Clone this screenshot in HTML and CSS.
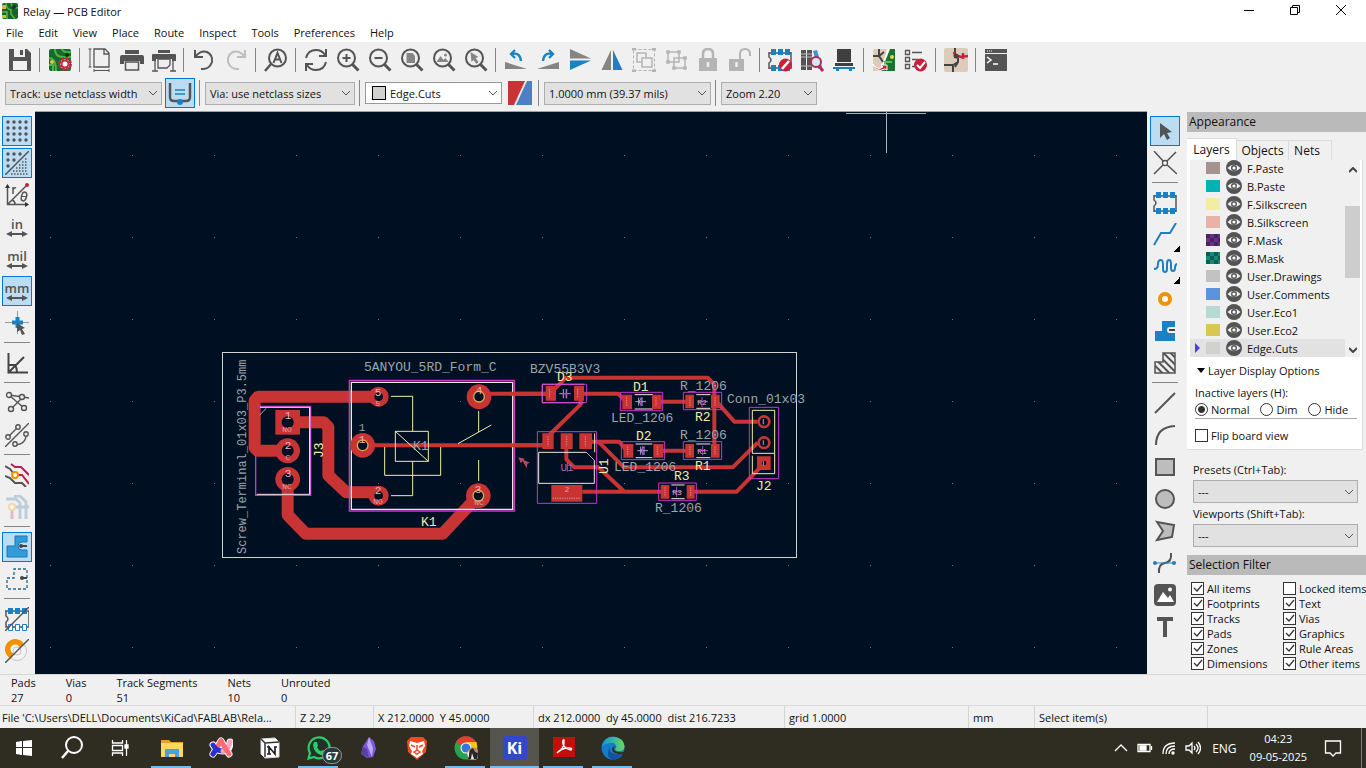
FILE: index.html
```html
<!DOCTYPE html>
<html lang="en">
<head>
<meta charset="utf-8">
<title>Relay — PCB Editor</title>
<link rel="stylesheet" href="styles.css">
</head>
<body>
<svg class="defs" aria-hidden="true">
  <defs>
    <symbol id="lens" viewBox="0 0 24 24"><circle cx="10.500" cy="10" r="8.500" fill="none" stroke="#545454" stroke-width="2"/><path d="M16.500 16.500l6 6" stroke="#545454" stroke-width="3"/></symbol>
    <symbol id="eye" viewBox="0 0 16 16"><circle cx="8" cy="8" r="8" fill="#545454"/><path d="M1.500 8Q8 1.500 14.500 8Q8 14.500 1.500 8z" fill="#f4f4f4"/><circle cx="8" cy="8" r="2.300" fill="#fff" stroke="#545454" stroke-width="1.400"/></symbol>
    <symbol id="fp" viewBox="0 0 24 24"><path d="M1 4v5q4 3 0 6v6M23 4v17M1 5h22M1 20h22" fill="none" stroke="#545454" stroke-width="1.500"/><path d="M3 1h5v6H3zM10 1h5v6h-5zM17 1h5v6h-5zM3 17h5v6H3zM10 17h5v6h-5zM17 17h5v6h-5z" fill="#1a81c4"/></symbol>
  </defs>
</svg>

<header class="titlebar">
  <svg class="app-icon" viewBox="0 0 16 16"><rect width="16" height="16" rx="2" fill="#18642c"/><path d="M4 0q0 6 5 7v4l4 5M9 0q1 5 7 5M0 9h5v7" fill="none" stroke="#5bb53c" stroke-width="1.500"/><path d="M0 2h4v4H0zM0 12h4v3H0z" fill="#d8b441"/><circle cx="12" cy="4" r="2" fill="#0d3b1c"/></svg>
  <span class="title">Relay — PCB Editor</span>
  <button class="win" aria-label="Minimize"><svg width="12" height="12" viewBox="0 0 12 12"><path d="M1 6.500h10" stroke="#000"/></svg></button>
  <button class="win" aria-label="Restore"><svg width="12" height="12" viewBox="0 0 12 12"><path d="M1.500 3.500h7v7h-7zM3.500 3V1.500h7v7H9" fill="none" stroke="#000"/></svg></button>
  <button class="win" aria-label="Close"><svg width="12" height="12" viewBox="0 0 12 12"><path d="M1 1l10 10M11 1L1 11" stroke="#000"/></svg></button>
</header>

<nav class="menubar">
  <button>File</button><button>Edit</button><button>View</button><button>Place</button><button>Route</button><button>Inspect</button><button>Tools</button><button>Preferences</button><button>Help</button>
</nav>

<div class="toolbar" role="toolbar" aria-label="Main">
  <button aria-label="Save"><svg viewBox="0 0 24 24"><path fill="#545454" fill-rule="evenodd" d="M1 1h18l4 4v18H1zM6 1v8h11V1zM5 13v9h14v-9z"/><path fill="#545454" d="M12 2h3v5h-3z"/></svg></button><i></i>
  <button aria-label="Board setup"><svg viewBox="0 0 24 24"><rect x="1" y="1" width="22" height="22" rx="2" fill="#156b2c"/><path d="M7 1q0 8 8 8h8M14 1q1 4 9 3M1 10q7 0 7 13M1 17h4v6" fill="none" stroke="#52b13f" stroke-width="2"/><circle cx="4" cy="14" r="2" fill="#e2c74b"/><circle cx="19" cy="7" r="2" fill="#092f17"/><circle cx="17" cy="16" r="5" fill="#fff" stroke="#c62943" stroke-width="4" stroke-dasharray="2.500 1.400"/><circle cx="17" cy="16" r="3.500" fill="#fff" stroke="#c62943" stroke-width="2"/></svg></button><i></i>
  <button aria-label="Page settings"><svg viewBox="0 0 24 24"><path d="M6 1h11l4 4v14H6zM16 1v5h5" fill="none" stroke="#545454" stroke-width="1.300"/><path d="M2 1v18M.5 1h3M.5 19h3M6 22.500h15M6 21v3M21 21v3" stroke="#545454"/></svg></button>
  <button aria-label="Print"><svg viewBox="0 0 24 24"><path fill="#545454" d="M5 2h14v4H5zM2 7h20q2 0 2 2v7h-4v-3H4v3H0V9q0-2 2-2z"/><path d="M5.500 14h13v8h-13z" fill="#eee" stroke="#545454" stroke-width="1.500"/></svg></button>
  <button aria-label="Plot"><svg viewBox="0 0 24 24"><path fill="#545454" d="M6 2h12v3H6zM1 6h22q1 0 1 1v6h-4v-2H4v2H0V7q0-1 1-1z"/><path d="M6 11h12v6l-3 3H6zM3 12v11M21 12v11M0 23h6M18 23h6" fill="#eee" stroke="#545454" stroke-width="1.300"/></svg></button><i></i>
  <button aria-label="Undo"><svg viewBox="0 0 24 24"><path d="M3 2v7h8M4 8Q9 2 15 4Q21 7 20 14Q17 22 9 21" fill="none" stroke="#545454" stroke-width="2"/></svg></button>
  <button aria-label="Redo" disabled><svg viewBox="0 0 24 24"><path d="M21 2v7h-8M20 8Q15 2 9 4Q3 7 4 14Q7 22 15 21" fill="none" stroke="#bdbdbd" stroke-width="2"/></svg></button><i></i>
  <button aria-label="Find"><svg viewBox="0 0 24 24"><circle cx="13.500" cy="10" r="8.500" fill="none" stroke="#545454" stroke-width="2"/><path d="M7 16l-6 7" stroke="#545454" stroke-width="2.500"/><path d="M9.500 15l4-10 4 10M11 11.500h5" fill="none" stroke="#545454" stroke-width="2"/></svg></button><i></i>
  <button aria-label="Refresh"><svg viewBox="0 0 24 24"><path d="M2 10Q4 2 12 2q6 0 9 5M22 1v7h-7M22 14q-2 8-10 8-6 0-9-5M2 23v-7h7" fill="none" stroke="#545454" stroke-width="2"/></svg></button>
  <button aria-label="Zoom in"><svg viewBox="0 0 24 24"><use href="#lens"/><path d="M10.500 6v8M6.500 10h8" stroke="#545454" stroke-width="2"/></svg></button>
  <button aria-label="Zoom out"><svg viewBox="0 0 24 24"><use href="#lens"/><path d="M6.500 10h8" stroke="#545454" stroke-width="2"/></svg></button>
  <button aria-label="Zoom to page"><svg viewBox="0 0 24 24"><use href="#lens"/><path d="M6.500 5h6l2.500 3v7H6.500z" fill="#858585"/></svg></button>
  <button aria-label="Zoom to objects"><svg viewBox="0 0 24 24"><use href="#lens"/><path d="M4.500 14l4-6 3 4 2-2 3 4z" fill="#858585"/><circle cx="13.500" cy="7" r="1.500" fill="#858585"/></svg></button>
  <button aria-label="Zoom to selection"><svg viewBox="0 0 24 24"><use href="#lens"/><path d="M6.500 4l8 5-3 1 3 4-2 2-3-4-2 2z" fill="#858585"/></svg></button><i></i>
  <button aria-label="Rotate counterclockwise"><svg viewBox="0 0 24 24"><path d="M1 14l22 7H1z" fill="#858585"/><path d="M8 6q8-2 9 7M11 2L7 6l4 4" fill="none" stroke="#1a81c4" stroke-width="2.300"/></svg></button>
  <button aria-label="Rotate clockwise"><svg viewBox="0 0 24 24"><path d="M23 14L1 21h22z" fill="#858585"/><path d="M16 6q-8-2-9 7M13 2l4 4-4 4" fill="none" stroke="#1a81c4" stroke-width="2.300"/></svg></button>
  <button aria-label="Mirror vertically"><svg viewBox="0 0 24 24"><path d="M2 1l21 9.500H2z" fill="#858585"/><path d="M2 22l21-9.500H2z" fill="#1a81c4"/></svg></button>
  <button aria-label="Mirror horizontally"><svg viewBox="0 0 24 24"><path d="M1.500 22L11 2v20z" fill="#858585"/><path d="M22.500 22L13 2v20z" fill="#1a81c4"/></svg></button>
  <button aria-label="Group" disabled><svg viewBox="0 0 24 24" fill="none" stroke="#b4b4b4"><path d="M1.500 1.500h21v21h-21z" stroke-dasharray="3 2"/><path d="M0 1h4M20 1h4M0 23h4M20 23h4" stroke-width="3"/><path d="M5 5h9v9H5z" stroke-width="1.500"/><path d="M10 10h10v9H10z" stroke-width="1.500" fill="#f0f0f0"/></svg></button>
  <button aria-label="Ungroup" disabled><svg viewBox="0 0 24 24" fill="none" stroke="#b4b4b4" stroke-width="1.500"><path d="M4 4h11v10H4zM10 10h11v10H10z"/><path fill="#b4b4b4" d="M3 3h2v2H3zM14 3h2v2h-2zM3 13h2v2H3zM20 9h2v2h-2zM9 19h2v2H9zM20 19h2v2h-2z"/></svg></button>
  <button aria-label="Lock" disabled><svg viewBox="0 0 24 24"><path d="M3 10h18v13H3z" fill="#b4b4b4"/><path d="M7 10V6q0-5 5-5t5 5v4" fill="none" stroke="#b4b4b4" stroke-width="2.500"/><path d="M12 14v5" stroke="#eee" stroke-width="2.500"/></svg></button>
  <button aria-label="Unlock" disabled><svg viewBox="0 0 24 24"><path d="M1 11h15v12H1z" fill="#b4b4b4"/><path d="M12 11V6q0-5 5-5t5 5v2" fill="none" stroke="#b4b4b4" stroke-width="2"/><path d="M8.500 14v5" stroke="#eee" stroke-width="2.500"/></svg></button><i></i>
  <button aria-label="Footprint editor"><svg viewBox="0 0 24 24"><use href="#fp"/><circle cx="17.500" cy="17" r="6.500" fill="#c8203c"/><path d="M14 21l7-8" stroke="#fff" stroke-width="2.500"/></svg></button>
  <button aria-label="Footprint browser"><svg viewBox="0 0 24 24"><path d="M1 2h5v20H1zM7 2h5v20H7z" fill="#545454"/><path d="M1 6h11M1 9h11M1 18h11" stroke="#bbb"/><path d="M13 3l4-1 5 17-4 2z" fill="#3d97ce"/><circle cx="16" cy="14" r="5" fill="#d8e6f0" stroke="#b62758" stroke-width="2"/><path d="M19 18l4 5" stroke="#b62758" stroke-width="3"/></svg></button>
  <button aria-label="3D viewer"><svg viewBox="0 0 24 24"><path d="M5 1h14v13H5zM3 15h18v3H3z" fill="#3f3f3f"/><path d="M1 19h22v2H1zM4 21h3v2H4zM17 21h3v2h-3z" fill="#1a81c4"/></svg></button><i></i>
  <button aria-label="Update PCB"><svg viewBox="0 0 24 24"><path d="M2 1h13L9 23H1V2z" fill="#dccbb8"/><path d="M17 1h6v22H9z" fill="#17732f"/><path d="M17 1L9 21" stroke="#fff" stroke-width="2"/><path d="M1 8h6V1M7 8l5-4M7 8l4 6" stroke="#444" stroke-width="2" fill="none"/><path d="M13 20v-6h7" stroke="#61be4f" stroke-width="2" fill="none"/><circle cx="20" cy="9" r="2" fill="#e7d246"/><path d="M1 16q4 7 10 3l-2-2h6v5l-2-1Q4 25 1 16z" fill="#c8203c" stroke="#fff"/></svg></button>
  <button aria-label="Design rules check"><svg viewBox="0 0 24 24"><path d="M1.500 2.500h4v4h-4zM1.500 9.500h4v4h-4zM1.500 16.500h4v4h-4zM8 4.500h10M8 11.500h6M8 18.500h3" fill="none" stroke="#545454" stroke-width="1.300"/><circle cx="16.500" cy="17" r="6.500" fill="#c8203c"/><path d="M13 17l3 3 5-6" fill="none" stroke="#fff" stroke-width="2"/></svg></button><i></i>
  <button aria-label="Show schematic"><svg viewBox="0 0 24 24"><rect width="24" height="24" rx="2" fill="#dccbb8"/><path d="M0 17h9l5-3v-4l-3-3V0M9 17v7M14 14l-3 5" stroke="#444" stroke-width="2" fill="none"/><path d="M10 4l1 3 6 2 7-1M19 5v6" stroke="#c8203c" stroke-width="2.500" fill="none"/><circle cx="12" cy="8" r="2.500" fill="#444"/></svg></button><i></i>
  <button aria-label="Scripting console"><svg viewBox="0 0 24 24"><path d="M1 1h22v4H1zM1 6h22v17H1z" fill="#545454"/><path d="M3 3h6" stroke="#fff" stroke-dasharray="1 1"/><path d="M3 9l4 3-4 3M9 16h5" fill="none" stroke="#fff" stroke-width="1.500"/></svg></button>
</div>

<div class="toolbar second" role="toolbar" aria-label="Properties">
  <select class="track" aria-label="Track width"><option>Track: use netclass width</option></select>
  <button class="on" aria-label="Automatic track width"><svg viewBox="0 0 28 28"><path d="M4 4v14q0 4 4 4h12q4 0 4-4V4" fill="none" stroke="#545454" stroke-width="2.500"/><path d="M9 11h10M9 15h10" stroke="#1a81c4" stroke-width="1.500"/><circle cx="14" cy="23" r="3" fill="#1a81c4"/></svg></button><i></i>
  <select class="via" aria-label="Via size"><option>Via: use netclass sizes</option></select><i></i>
  <span class="layer-field"><span class="chip"></span><select class="layer" aria-label="Active layer"><option>Edge.Cuts</option></select></span>
  <button class="pair" aria-label="Layer pair"><svg viewBox="0 0 24 24"><path d="M0 0h17L6 24H0z" fill="#c83434"/><path d="M19 0h5v24H8z" fill="#4d7fc4"/></svg></button><i></i>
  <select class="grid" aria-label="Grid"><option>1.0000 mm (39.37 mils)</option></select><i></i>
  <select class="zoom" aria-label="Zoom"><option>Zoom 2.20</option></select>
</div>

<main class="work">
  <div class="side left" role="toolbar" aria-label="Options">
    <button class="on" aria-label="Show grid"><svg viewBox="0 0 24 24"><path d="M3 3h19M3 9h19M3 15h19M3 21h19" stroke="#545454" stroke-width="3.400" stroke-linecap="round" stroke-dasharray="0 6"/></svg></button>
    <button class="on" aria-label="Grid overrides"><svg viewBox="0 0 24 24"><path d="M3 3h13M3 9h7M3 15h1" stroke="#545454" stroke-width="3.400" stroke-linecap="round" stroke-dasharray="0 6"/><path d="M0 24L24 0" stroke="#545454" stroke-width="1.500"/><path d="M20 8h3M17 11h6M14 14h9M11 17h12M8 20h15M6 23h17" stroke="#545454" stroke-width="1.500" stroke-dasharray="1.500 1.500"/></svg></button>
    <button aria-label="Polar coordinates"><svg viewBox="0 0 24 24"><path d="M2.500 2v19.500H23M2.500 21.500L21 3M7 17q3 1 3 4M8 11V4M8 7q1-3 3-2" fill="none" stroke="#545454" stroke-width="1.500"/><path d="M0 5l2.500-4L5 5zM20 19l4 2.500-4 2.500z" fill="#333"/><circle cx="22" cy="2" r="2" fill="#c8203c"/><ellipse cx="19" cy="13.500" rx="2.500" ry="4.500" transform="rotate(15 19 13.500)" fill="none" stroke="#545454" stroke-width="1.500"/><path d="M16 13.500h6" stroke="#545454"/></svg></button>
    <button class="unit" aria-label="Inches">in<svg viewBox="0 0 22 6"><path d="M3 3h16" stroke="#545454" stroke-width="2"/><path d="M6 0L0 3l6 3zM16 0l6 3-6 3z" fill="#545454"/></svg></button>
    <button class="unit" aria-label="Mils">mil<svg viewBox="0 0 22 6"><path d="M3 3h16" stroke="#545454" stroke-width="2"/><path d="M6 0L0 3l6 3zM16 0l6 3-6 3z" fill="#545454"/></svg></button>
    <button class="unit on" aria-label="Millimeters">mm<svg viewBox="0 0 22 6"><path d="M3 3h16" stroke="#545454" stroke-width="2"/><path d="M6 0L0 3l6 3zM16 0l6 3-6 3z" fill="#545454"/></svg></button>
    <button aria-label="Full-window crosshairs"><svg viewBox="0 0 24 24"><path d="M0 11.500h24M12.500 0v23" stroke="#999"/><path d="M7 11.500h11M12.500 6v11" stroke="#1a81c4" stroke-width="4"/><path d="M12 12l8 5-3 1 3 5-3 1-2-5-3 2z" fill="#545454"/></svg></button><i></i>
    <button aria-label="Limit angles"><svg viewBox="0 0 24 24"><path d="M3.500 2v19.500H23M3 22L19 6M3 14h7q2 3 2 7" fill="none" stroke="#444" stroke-width="2"/></svg></button><i></i>
    <button aria-label="Ratsnest"><svg viewBox="0 0 24 24"><g fill="#eee" stroke="#545454" stroke-width="1.400"><path d="M4 4l14 2 6 1M18 6L6 18M4 4l15 13"/><circle cx="4" cy="4" r="2.500"/><circle cx="17" cy="6" r="2.500"/><circle cx="6" cy="18" r="2.500"/><circle cx="19" cy="17" r="2.500"/></g></svg></button>
    <button aria-label="Curved ratsnest"><svg viewBox="0 0 24 24"><g fill="#eee" stroke="#545454" stroke-width="1.400"><path d="M0 24L24 0M4 13L13 4"/><path fill="none" d="M10 22q12-1 11-12"/><circle cx="3" cy="14" r="2.200"/><circle cx="13" cy="4" r="2.200"/><circle cx="21" cy="11" r="2.200"/><circle cx="10" cy="21" r="2.200"/></g></svg></button><i></i>
    <button aria-label="Net colors"><svg viewBox="0 0 24 24" fill="none" stroke-width="2"><path d="M6 1l4 3h6l8 8" stroke="#b51f53"/><path d="M10 12h7l7 9" stroke="#c8203c"/><path d="M0 13l5 2 5 5h7l4 4" stroke="#545454"/><path d="M0 3l5 3 4 5" stroke="#545454"/><circle cx="10" cy="12" r="3" fill="#fff" stroke="#f29100"/></svg></button>
    <button aria-label="Contrast mode"><svg viewBox="0 0 24 24" fill="none" stroke-width="3" opacity=".7"><path d="M1 4h10l4 4v16M9 1h6l6 6v17M7 12h17" stroke="#a9bfd4"/><path d="M7 13v11" stroke="#dba6b0"/><circle cx="7" cy="12" r="3" fill="#fff" stroke="#f3cd91" stroke-width="2"/></svg></button><i></i>
    <button class="on" aria-label="Filled zones"><svg viewBox="0 0 24 24"><path d="M2 11h8V1h12v6h-5q-4 0-4 4t4 4h5v7H2z" fill="#329bd8" stroke="#1878b8"/><path d="M15 11h7" stroke="#444" stroke-width="2"/><circle cx="16" cy="11" r="2" fill="#444"/></svg></button>
    <button aria-label="Zone outlines"><svg viewBox="0 0 24 24"><path d="M2 11h7V2h13v20H2z" fill="none" stroke="#28658e" stroke-width="1.300" stroke-dasharray="3 2"/><path d="M16 11h6" stroke="#444" stroke-width="2"/><circle cx="17" cy="11" r="2" fill="#444"/></svg></button><i></i>
    <button aria-label="Pad outlines"><svg viewBox="0 0 24 24"><path d="M0 4h24v16H1v-5q4-3 0-6V4" fill="none" stroke="#545454" stroke-width="1.500"/><path d="M3 1h5v6H3zM10 1h5v6h-5zM17 1h5v6h-5z" fill="#1a81c4"/><path d="M3.500 17.500h4v6h-4zM10.500 17.500h4v6h-4zM17.500 17.500h4v6h-4z" fill="#fff" stroke="#1a81c4"/><path d="M0 24L24 0" stroke="#545454" stroke-width="1.500"/></svg></button>
    <button aria-label="Via outlines"><svg viewBox="0 0 24 24"><circle cx="12" cy="12" r="9.500" fill="#f4f4f4" stroke="#c4c4c4"/><circle cx="12" cy="12" r="4" fill="#f4f4f4" stroke="#c4c4c4"/><path d="M7 17A7.500 7.500 0 1 1 17 7" fill="none" stroke="#f29100" stroke-width="5.500"/><path d="M0 24L24 0" stroke="#545454" stroke-width="1.500"/></svg></button>
  </div>

  <section class="canvas" aria-label="Board">
    <svg viewBox="35 112 1112 562" preserveAspectRatio="xMidYMid slice">
      <defs><pattern id="dots" x="50" y="155" width="82" height="82" patternUnits="userSpaceOnUse"><rect width="1" height="1" fill="#6c7480"/></pattern></defs>
      <rect x="35" y="112" width="1112" height="562" fill="#001023"/>
      <rect x="35" y="112" width="1112" height="562" fill="url(#dots)"/>
      <path d="M846 113.500h80M886.500 112v41" stroke="#a9b0b8"/>
      <rect x="222.500" y="352.500" width="574" height="205" fill="none" stroke="#d0d2cd"/>
      <g transform="translate(215 345) scale(.33333)" fill="none">
        <g stroke="#c83434" stroke-width="36" stroke-linejoin="round" stroke-linecap="round">
          <path d="M491 155H130l-11 12v141l9 9h90"/><path d="M218 232h108l14 14v145l54 51h96"/><path d="M218 403v107l54 56h411l107-114"/>
        </g>
        <g stroke="#c83434" stroke-width="12"><path d="M793 146h200M442 301h560"/></g>
        <g stroke="#c936c9" stroke-width="4"><path d="M403 106h495v392H403z"/><path d="M132 184h155v267H122V331"/></g>
        <g stroke="#f2eda1" stroke-width="4"><path stroke="#efe8d8" d="M409 112h484v381H409z"/><path stroke="#f5e5e8" stroke-width="3" d="M135 187h149v261H125M284 187v261"/>
          <path d="M528 154h65v105M541 259h99v90h-99zM541 259l99 90M593 349v103h-65M509 306v85h168v-85M791 198v63M729 296l100-56M791 345v63" stroke-width="3"/></g>
        <path d="M134 210l20-20" stroke="#afafaf" stroke-width="3"/>
        <g fill="#c83434"><path d="M181 195h74v74h-74z"/><circle cx="218" cy="317" r="37"/><circle cx="218" cy="403" r="37"/><circle cx="491" cy="155" r="30"/><circle cx="491" cy="452" r="30"/><circle cx="443" cy="301" r="37"/><circle cx="792" cy="155" r="37"/><circle cx="790" cy="452" r="37"/></g>
        <g fill="#001023"><circle cx="218" cy="232" r="18"/><circle cx="218" cy="317" r="18"/><circle cx="218" cy="403" r="18"/><circle cx="491" cy="155" r="13"/><circle cx="491" cy="452" r="13"/><g stroke="#d8ad48" stroke-width="4"><circle cx="443" cy="301" r="16"/><circle cx="792" cy="155" r="16"/><circle cx="790" cy="452" r="16"/></g></g>
      </g>
      <g transform="translate(510 345) scale(.33333)" fill="none">
        <g stroke="#c83434" stroke-width="12" stroke-linejoin="round">
          <path d="M0 146h115M215 146h110l20 22M120 146l48-48h425l20 20v198M212 150v28L118 270v30M440 170h100M620 170l53 60h70M445 317h95M0 301h110M169 300v43l24 24h72l78 73M235 290h93l22 27M265 290l77 77h326l75-74M217 440h255M540 440h140l82-84"/>
        </g>
        <g stroke="#f2eda1" stroke-width="3"><path stroke="#eceadf" d="M97 118h125M97 173h125M97 118v55M374 149h55M374 192h55M559 149h42M559 190h42M377 297h50M377 338h50M559 297h42M559 338h42M484 420h40M484 461h40M86 322h143l24 24v69H86z"/><path d="M254 265v57M727 196h67v129h-67zM727 332v54M794 325v61h-32M727 386h35"/></g>
        <path fill="#c83434" d="M107 123h31v44h-31zM192 123h30v44h-30zM337 149h29v43h-29zM426 149h29v43h-29zM526 149h26v41h-26zM603 149h26v41h-26zM340 297h30v41h-30zM430 297h30v41h-30zM526 297h26v41h-26zM603 297h26v41h-26zM97 265h34v47H97zM152 265h36v47h-36zM208 265h38v47h-38zM124 420h93v50h-93zM452 420h26v41h-26zM530 420h24v41h-24zM741 334h41v41h-41z"/>
        <g stroke="#c936c9" stroke-width="3"><path d="M97 118h133v55H97zM331 142h127v55H331zM520 142h115v52H520zM334 290h130v54H334zM520 290h115v53H520zM82 260h178v215H82zM446 414h113v52H446zM718 187h88v214h-88z"/></g>
        <g stroke="#e8898d" stroke-width="3" stroke-dasharray="4 3"><path d="M119 132v26M203 132v26M350 157v26M438 157v26M540 157v26M615 157v26M353 304v26M442 304v26M540 304v26M615 304v26M114 274v30M170 274v30M226 274v30M465 427v26M542 427v26M128 460h84"/></g>
        <g stroke="#c83434" stroke-width="8" fill="#001023"><circle cx="762" cy="230" r="16"/><circle cx="762" cy="293" r="16"/><circle cx="762" cy="354" r="11"/></g>
        <g stroke="#a9a9c4" stroke-width="3"><path d="M148 146h34M160 132v28M170 132v28M376 170h32M386 158v24M396 158v24l-10-12zM382 317h32M392 305v24M402 305v24l-10-12zM760 222v16M760 286v14M760 348v14M229 322l24 24"/></g>
        <g stroke="#b642c8" stroke-width="3"><path d="M168 132v28M154 146h24M393 156v28M576 156v30M398 303v28M578 303v28M500 426v30M172 352v28M486 440h30M562 170h32M562 317h32"/></g>
        <path fill="#b34a63" d="M25 337l20 4-5 4 20 8-8 3-2 14-12-22-6 7z"/>
      </g>
      <g class="fab">
        <text class="long" transform="translate(246 554) rotate(-90)">Screw_Terminal_01x03_P3.5mm</text>
        <text x="364" y="371">5ANYOU_5RD_Form_C</text>
        <text x="530" y="373">BZV55B3V3</text>
        <text x="611" y="422">LED_1206</text><text x="614" y="471">LED_1206</text>
        <text x="680" y="390">R_1206</text><text x="680" y="439">R_1206</text><text x="655" y="512">R_1206</text>
        <text x="727" y="403">Conn_01x03</text><text x="413" y="450">K1</text>
      </g>
      <g class="ref">
        <text x="421" y="526">K1</text><text transform="translate(323 458) rotate(-90)">J3</text><text x="557" y="381">D3</text><text x="633" y="391">D1</text><text x="636" y="440">D2</text><text x="695" y="421">R2</text><text x="695" y="470">R1</text><text x="674" y="480">R3</text><text x="756" y="490">J2</text><text transform="translate(608 474) rotate(-90)">U1</text>
      </g>
      <g class="pad"><text x="288" y="419">1</text><text x="288" y="449">2</text><text x="288" y="477">3</text><text x="378" y="396">5</text><text x="378" y="494">2</text><text x="362" y="443">1</text><text x="479" y="394">4</text><text x="478" y="493">3</text><text class="quiet" x="362" y="431">1</text></g>
      <g class="net"><text x="287" y="432">NO</text><text x="288" y="460">C</text><text x="287" y="489">NC</text><text x="378" y="406">5</text><text x="378" y="504">NO</text><text x="479" y="505">NC</text><text x="702" y="405">R2</text><text x="702" y="454">R1</text><text x="677" y="495">R3</text><text x="567" y="492">2</text><text class="val" x="567" y="471">U1</text></g>
    </svg>
  </section>

  <div class="side right" role="toolbar" aria-label="Tools">
    <button class="on" aria-label="Select"><svg viewBox="0 0 24 24"><path d="M7 4l12 9-5 1 3 5-3 2-3-6-4 4z" fill="#545454"/></svg></button>
    <button aria-label="Local ratsnest"><svg viewBox="0 0 24 24"><path d="M1 0l10 11M23 1L12 12 1 23M12 12l12 11" stroke="#545454" stroke-width="1.500"/><circle cx="12" cy="12" r="2.500" fill="#fff" stroke="#545454" stroke-width="1.300"/></svg></button><i></i>
    <button aria-label="Place footprint"><svg viewBox="0 0 24 24"><use href="#fp"/></svg></button>
    <button class="more" aria-label="Route track"><svg viewBox="0 0 24 24"><path d="M1 22l7-12h9l6-10" fill="none" stroke="#1a81c4" stroke-width="2"/></svg></button>
    <button class="more" aria-label="Tune length"><svg viewBox="0 0 24 24"><path d="M1 14q4 0 4-5 0-4 3-4 2 0 2 5v4q0 3 2 3t2-3v-5q0-4 2-4t2 4v4q0 3 2 3t2-3q0-4 3-4" fill="none" stroke="#1a81c4" stroke-width="2"/></svg></button>
    <button aria-label="Place via"><svg viewBox="0 0 24 24"><circle cx="12" cy="12" r="5" fill="#fff" stroke="#f29100" stroke-width="4"/></svg></button>
    <button aria-label="Draw zone"><svg viewBox="0 0 24 24"><path d="M2 12h7V2h13v6h-5q-3 0-3 3t3 3h5v8H2z" fill="#1a81c4"/><path d="M16 11h6" stroke="#444" stroke-width="2"/></svg></button>
    <button aria-label="Rule area"><svg viewBox="0 0 24 24"><defs><pattern id="hatch" width="5" height="5" patternUnits="userSpaceOnUse" patternTransform="rotate(-45)"><path d="M0 0v5" stroke="#545454" stroke-width="4"/></pattern></defs><path d="M2 11h8V2h12v20H2z" fill="url(#hatch)" stroke="#545454" stroke-width="1.500"/></svg></button><i></i>
    <button aria-label="Line"><svg viewBox="0 0 24 24"><path d="M2 22L22 2" stroke="#545454" stroke-width="2"/></svg></button>
    <button aria-label="Arc"><svg viewBox="0 0 24 24"><path d="M3 22Q3 4 22 3" fill="none" stroke="#545454" stroke-width="2"/></svg></button>
    <button aria-label="Rectangle"><svg viewBox="0 0 24 24"><path d="M3 4h18v16H3z" fill="#bdbdbd" stroke="#545454" stroke-width="2"/></svg></button>
    <button aria-label="Circle"><svg viewBox="0 0 24 24"><circle cx="12" cy="12" r="9" fill="#bdbdbd" stroke="#545454" stroke-width="2"/></svg></button>
    <button aria-label="Polygon"><svg viewBox="0 0 24 24"><path d="M4 3l17 3-2 12L4 21l6-9z" fill="#bdbdbd" stroke="#545454" stroke-width="2"/></svg></button>
    <button aria-label="Bezier"><svg viewBox="0 0 24 24"><path d="M6 22q-1-9 6-10t6-10" fill="none" stroke="#545454" stroke-width="2"/><path d="M1 12h20" stroke="#1a81c4"/><circle cx="2" cy="12" r="2" fill="#1a81c4"/><circle cx="21" cy="12" r="2" fill="#1a81c4"/></svg></button>
    <button aria-label="Image"><svg viewBox="0 0 24 24"><rect x="1" y="1" width="22" height="22" rx="4" fill="#545454"/><path d="M4 19l6-10 5 6 2-3 4 7z" fill="#fff"/><circle cx="17" cy="6.500" r="2" fill="#fff"/></svg></button>
    <button aria-label="Text"><svg viewBox="0 0 24 24"><path d="M4 4h16M12 4v18" stroke="#545454" stroke-width="4"/></svg></button>
  </div>

  <aside class="panel">
    <h2>Appearance</h2>
    <div class="tabs" role="tablist"><button class="active" role="tab">Layers</button><button role="tab">Objects</button><button role="tab">Nets</button></div>
    <div class="page">
      <div class="list">
        <ul class="layers">
          <li><span class="sw fpaste"></span><svg class="eye"><use href="#eye"/></svg>F.Paste</li>
          <li><span class="sw bpaste"></span><svg class="eye"><use href="#eye"/></svg>B.Paste</li>
          <li><span class="sw fsilk"></span><svg class="eye"><use href="#eye"/></svg>F.Silkscreen</li>
          <li><span class="sw bsilk"></span><svg class="eye"><use href="#eye"/></svg>B.Silkscreen</li>
          <li><span class="sw fmask"></span><svg class="eye"><use href="#eye"/></svg>F.Mask</li>
          <li><span class="sw bmask"></span><svg class="eye"><use href="#eye"/></svg>B.Mask</li>
          <li><span class="sw draw"></span><svg class="eye"><use href="#eye"/></svg>User.Drawings</li>
          <li><span class="sw comm"></span><svg class="eye"><use href="#eye"/></svg>User.Comments</li>
          <li><span class="sw eco1"></span><svg class="eye"><use href="#eye"/></svg>User.Eco1</li>
          <li><span class="sw eco2"></span><svg class="eye"><use href="#eye"/></svg>User.Eco2</li>
          <li class="current"><span class="sw cuts"></span><svg class="eye"><use href="#eye"/></svg>Edge.Cuts</li>
        </ul>
        <div class="scroll"><svg viewBox="0 0 8 6"><path d="M0 5l4-4 4 4"/></svg><span></span><svg viewBox="0 0 8 6"><path d="M0 1l4 4 4-4"/></svg></div>
      </div>
      <button class="fold">Layer Display Options</button>
      <fieldset>
        <legend>Inactive layers (H):</legend>
        <label><input type="radio" name="inactive" checked>Normal</label><label><input type="radio" name="inactive">Dim</label><label><input type="radio" name="inactive">Hide</label>
      </fieldset>
      <label class="flip"><input type="checkbox">Flip board view</label>
    </div>
    <div class="presets">
      <label for="presets">Presets (Ctrl+Tab):</label><select id="presets"><option>---</option></select>
      <label for="views">Viewports (Shift+Tab):</label><select id="views"><option>---</option></select>
    </div>
    <h2>Selection Filter</h2>
    <div class="filter">
      <label><input type="checkbox" checked>All items</label><label><input type="checkbox">Locked items</label>
      <label><input type="checkbox" checked>Footprints</label><label><input type="checkbox" checked>Text</label>
      <label><input type="checkbox" checked>Tracks</label><label><input type="checkbox" checked>Vias</label>
      <label><input type="checkbox" checked>Pads</label><label><input type="checkbox" checked>Graphics</label>
      <label><input type="checkbox" checked>Zones</label><label><input type="checkbox" checked>Rule Areas</label>
      <label><input type="checkbox" checked>Dimensions</label><label><input type="checkbox" checked>Other items</label>
    </div>
  </aside>
</main>

<dl class="info">
  <div><dt>Pads</dt><dd>27</dd></div><div><dt>Vias</dt><dd>0</dd></div><div><dt>Track Segments</dt><dd>51</dd></div><div><dt>Nets</dt><dd>10</dd></div><div><dt>Unrouted</dt><dd>0</dd></div>
</dl>

<footer class="status">
  <span>File 'C:\Users\DELL\Documents\KiCad\FABLAB\Rela...</span><span>Z 2.29</span><span>X 212.0000&nbsp; Y 45.0000</span><span>dx 212.0000&nbsp; dy 45.0000&nbsp; dist 216.7233</span><span>grid 1.0000</span><span>mm</span><span>Select item(s)</span><span></span>
</footer>

<nav class="taskbar" aria-label="Taskbar">
  <button aria-label="Start"><svg viewBox="0 0 24 24"><path fill="#fff" d="M4 6l6-1v6H4zM11 5l9-1v7h-9zM4 12h6v7l-6-1zM11 12h9v8l-9-1z"/></svg></button>
  <button aria-label="Search"><svg viewBox="0 0 24 24"><circle cx="14" cy="9" r="8" fill="none" stroke="#fff" stroke-width="2"/><path d="M8 15l-6 7" stroke="#fff" stroke-width="2.500"/></svg></button>
  <button aria-label="Task view"><svg viewBox="0 0 24 24" fill="none" stroke="#fff" stroke-width="1.300"><path d="M4.500 4v3h10V4M4.500 20v-3h10v3M4.500 9.500h10v5h-10zM18.500 4v16"/><path d="M17 9h3v3h-3z" fill="#fff"/></svg></button>
  <button class="run app" aria-label="File Explorer"><svg viewBox="0 0 24 24"><path d="M1 4h8l2 2h12v5H1z" fill="#e5a22c"/><path d="M1 7h22v14H1z" fill="#ffd667"/><path d="M5 21v-7q0-1 1-1h12q1 0 1 1v7h-4v-3H9v3z" fill="#4b9fdb"/></svg></button>
  <button class="app" aria-label="Arc"><svg viewBox="0 0 24 24" fill="none" stroke-linecap="round" stroke-linejoin="round"><path d="M4 9q3 6 10 6t7-9M4 18l8-13 8 13" stroke="#fff" stroke-width="7"/><path d="M4 18l8-13" stroke="#ff6b75" stroke-width="5"/><path d="M4 9q3 6 10 6" stroke="#2632d2" stroke-width="5"/><path d="M4 18l2-3" stroke="#2632d2" stroke-width="5"/><path d="M14 15q6-2 7-9" stroke="#f7a4bf" stroke-width="5"/><path d="M12 5l8 13" stroke="#ff6b75" stroke-width="5"/></svg></button>
  <button class="app" aria-label="Notion"><svg viewBox="0 0 24 24"><path d="M3 3l14-1 4 4v15l-14 1-4-4z" fill="#fff" stroke="#ddd"/><path d="M3 3l4 4 14-1M7 7v14" fill="none" stroke="#333" stroke-width="1.500"/><path d="M11 18v-7l6 7v-7M9 11h3M16 11h3M9 18h4" fill="none" stroke="#222" stroke-width="1.700"/></svg></button>
  <button class="run app" aria-label="WhatsApp, 67 unread"><svg viewBox="0 0 24 24"><path d="M1.500 22.500L3 17a10.500 10.500 0 1 1 4 4z" fill="#24312a" stroke="#2acb68" stroke-width="2.200"/><path d="M7 6h3l1 4-1 1q1 3 4 4l2-1 3 2q-1 4-5 3Q7 17 6 9z" fill="#2acb68"/></svg><b class="badge">67</b></button>
  <button class="app" aria-label="Obsidian"><svg viewBox="0 0 24 24"><path d="M13 1l5 4 2 8-3 8-6 1-6-4 2-8z" fill="#7c58d8"/><path d="M13 1l-2 8 5 12 1-9z" fill="#bda8f8"/><path d="M5 18l2-7 4 2 2 9z" fill="#5940a3"/></svg></button>
  <button class="app" aria-label="Brave"><svg viewBox="0 0 24 24"><path d="M6 1h12l4 4-1 11-9 8-9-8L2 5z" fill="#f04a25"/><path d="M5 5l7 2 7-2 1 5-3 5 1 3-6 4-6-4 1-3-3-5z" fill="#fff"/><path d="M6 9l4 2M18 9l-4 2M12 9v5l-3 2 3 2 3-2-3-2" fill="none" stroke="#f04a25" stroke-width="1.500"/></svg></button>
  <button class="run app" aria-label="Chrome"><svg viewBox="0 0 24 24"><circle cx="12" cy="12" r="11.500" fill="#29a34b"/><path d="M2 6A11.500 11.500 0 0 1 22 6H12v6z" fill="#e63e32"/><path d="M12 6h10.500q3 12-9 17.500l5-11z" fill="#fbc116"/><circle cx="12" cy="12" r="5.500" fill="#fff"/><circle cx="12" cy="12" r="4.500" fill="#3376df"/><circle cx="19" cy="18" r="6.500" fill="#a98d72"/><path d="M14 23l2-9 3-2 2 4 3 1-1 6z" fill="#292629"/><path d="M18 17l2 6h-3zM13 17l2-2v7z" fill="#eee"/></svg></button>
  <button class="run app active" aria-label="KiCad"><span class="ki">Ki</span></button>
  <button class="run app" aria-label="Acrobat"><svg viewBox="0 0 24 24"><path d="M1 1h22v20H1z" fill="#c60d0b"/><path d="M5 17q8-5 7-13-2 0-1 4 2 5 8 6 2-2-2-2-8 0-12 5z" fill="none" stroke="#fff" stroke-width="1.300"/></svg></button>
  <button class="run app" aria-label="Edge"><svg viewBox="0 0 24 24"><defs><linearGradient id="eg"><stop stop-color="#1495d7"/><stop offset="1" stop-color="#63d95e"/></linearGradient></defs><circle cx="12" cy="12" r="11.500" fill="#137bcc"/><path d="M1 10Q4 0 13 1q10 1 10.500 9 0 6-7 5-4-1-1-4-1-5-7-4-4 1-7.500 3z" fill="url(#eg)"/><path d="M9 10q-3 9 12 8-4 6-10 5Q4 21 9 10z" fill="#1252a0"/><path d="M14 10q-4 7 9 6l1 3q-4-1-6-1-7-1-7-5 1-3 3-3z" fill="#2f2c22"/></svg></button>
  <span class="tray">
    <button aria-label="Hidden icons"><svg viewBox="0 0 16 16"><path d="M2 11l6-6 6 6"/></svg></button>
    <button aria-label="Battery"><svg viewBox="0 0 16 16"><path d="M1 4.500h12v7H1z"/><path d="M3 6h6v4H3z" fill="#fff"/><path d="M14.500 6v4"/></svg></button>
    <button aria-label="Wi-Fi"><svg viewBox="0 0 16 16"><path d="M2 14Q2 3 14 3M5 14q0-8 9-8M8 14q0-5 6-5"/><circle cx="12" cy="13" r="1" fill="#fff"/></svg></button>
    <button aria-label="Volume"><svg viewBox="0 0 16 16"><path d="M1 6h3l3-3v10l-3-3H1zM9 6q2 2 0 4M11 4q4 4 0 8M13 2q5 6 0 12"/></svg></button>
    <span class="lang">ENG</span><span class="clock">04:23<br>09-05-2025</span>
    <button class="note" aria-label="Notifications"><svg viewBox="0 0 18 18"><path d="M1.500 2h15v12H12l-3 3-3-3H1.500z"/></svg></button>
  </span>
</nav>
</body>
</html>
```
FILE: styles.css
```css
* { box-sizing: border-box; }
body { margin: 0; height: 100vh; min-height: 700px; display: flex; flex-direction: column; background: #f0f0f0; color: #111; font: 11px/15px "Open Sans", "Noto Sans", sans-serif; overflow: hidden; }
button { border: 0; padding: 0; margin: 0; background: none; color: inherit; font: inherit; }
.defs { position: absolute; width: 0; height: 0; }

.titlebar { display: flex; flex: none; align-items: center; height: 22px; padding: 0 2px; background: #fff; }
.app-icon { width: 16px; height: 16px; }
.title { flex: 1; padding-left: 5px; }
.win { width: 46px; height: 22px; padding-bottom: 2px; }
.win svg { display: block; margin: auto; }
.menubar { display: flex; flex: none; gap: 15px; height: 20px; padding: 0 6px; background: #fff; }

.toolbar { display: flex; flex: none; align-items: center; height: 35px; padding-left: 4px; }
.toolbar button { width: 32px; height: 32px; flex: none; }
.toolbar button svg { display: block; width: 24px; height: 24px; margin: auto; }
.toolbar i { width: 8px; height: 24px; flex: none; background: linear-gradient(#858585, #858585) 3px 0 / 1px 100% no-repeat; }
.toolbar.second { height: 34px; padding: 0 0 2px 5px; }
.second button.on { width: 30px; height: 30px; margin: 0 0 0 3px; }
.second button.on svg { width: 28px; height: 28px; }
.second i { width: 10px; height: 26px; background-position: 4px 0; }
.second .pair { width: 24px; height: 24px; margin: 0 2px 0 6px; }
.on { background: #bcdcf4 !important; border: 1px solid #0078d7; }

select { appearance: none; height: 23px; margin: 0; padding: 0 20px 0 4px; border: 1px solid #adadad; border-radius: 0; background: #e1e1e1 url("data:image/svg+xml,%3Csvg xmlns='http://www.w3.org/2000/svg' width='10' height='6'%3E%3Cpath d='M1 1l4 4 4-4' fill='none' stroke='%23555'/%3E%3C/svg%3E") right 3px center no-repeat; color: #111; font: inherit; }
.track { width: 157px; }
.via { width: 150px; }
.grid { width: 167px; }
.zoom { width: 96px; }
.layer-field { display: flex; align-items: center; width: 137px; height: 22px; border: 1px solid #999; background: #fff; padding-left: 6px; }
.chip { width: 14px; height: 14px; border: 1px solid #000; background: #d0d2cd; }
.layer { flex: 1; height: 20px; border: 0; background-color: #fff; }

.work { display: flex; flex: 1; min-height: 0; }
.side { display: flex; flex-direction: column; align-items: center; width: 35px; flex: none; padding: 4px 1px 0 0; }
.side button { display: flex; flex-direction: column; align-items: center; justify-content: center; width: 30px; height: 30px; margin: 1px 0; flex: none; }
.side button svg { display: block; width: 24px; height: 24px; }
.side i { width: 26px; height: 8px; flex: none; background: linear-gradient(#858585, #858585) 0 3px / 100% 1px no-repeat; }
.side .unit { font: 600 13px/14px "Open Sans", sans-serif; color: #545454; }
.side .unit svg { width: 22px; height: 6px; }
.side.right { width: 39px; padding-right: 3px; }
.more { position: relative; }
.more::after { content: ""; position: absolute; right: 0; bottom: -2px; width: 7px; height: 7px; background: linear-gradient(135deg, transparent 50%, #000 50%); }
.canvas { flex: 1; min-width: 0; border-top: 1px solid #a0a0a0; background: #001023; }
.canvas svg { display: block; width: 100%; height: 100%; }
.canvas text { font: 13px "Liberation Mono", monospace; }
.canvas .long { font-size: 12px; }
.fab { fill: #9aa5ac; }
.ref { fill: #f2eda1; }
.canvas .pad text, .canvas .net text { text-anchor: middle; fill: #e8b8b4; }
.canvas .net text { font-size: 8px; fill: #d8a4ae; }
.canvas .pad text { font-size: 11px; }
.canvas .pad .quiet { fill: #9aa5ac; }
.canvas .net .val { font-size: 11px; fill: #a06bb8; }

.panel { width: 180px; flex: none; overflow: hidden; padding: 1px 0 0 1px; }
h2 { margin: 0; height: 20px; padding: 0 2px; background: #bababa; font-size: 12px; line-height: 19px; font-weight: 400; }
.tabs { display: flex; align-items: flex-end; height: 28px; }
.tabs button { height: 20px; border: 1px solid #dcdcdc; border-left: 0; border-bottom: 0; width: 52px; font-size: 12px; line-height: 18px; }
.tabs button:last-child { width: 43px; padding-right: 6px; }
.tabs .active { width: 50px; height: 22px; background: #fff; }
.page { margin-right: 3px; padding: 0 2px 6px 3px; background: #fff; border: 1px solid #dcdcdc; border-width: 0 1px 1px 0; }
.list { display: flex; height: 197px; background: #f0f0f0; overflow: hidden; }
.layers { flex: 1; margin: -1px 0 0; padding: 0; list-style: none; }
.layers li { display: flex; align-items: center; height: 18px; padding-left: 16px; }
.layers .current { position: relative; background: #e2e2e2; }
.current::before { content: ""; position: absolute; left: 5px; border: 5px solid transparent; border-left-color: #4a3fd8; border-right: 0; }
.eye { width: 16px; height: 16px; margin: 0 5px 0 6px; }
.sw { width: 14px; height: 12px; }
.fpaste { background: #a59390; } .bpaste { background: #00b3b0; } .fsilk { background: #f2eda1; } .bsilk { background: #e8b2a7; }
.fmask { background: conic-gradient(#66347c 25%, #4a1f67 0 50%, #66347c 0 75%, #4a1f67 0) 0 0 / 8px 8px; }
.bmask { background: conic-gradient(#1d8478 25%, #066153 0 50%, #1d8478 0 75%, #066153 0) 0 0 / 8px 8px; }
.draw { background: #c2c2c2; } .comm { background: #5994dc; } .eco1 { background: #b4dbd2; } .eco2 { background: #d8c852; } .cuts { background: #d0d2cd; }
.scroll { display: flex; flex-direction: column; align-items: center; width: 15px; padding: 7px 0 4px; }
.scroll svg { width: 8px; height: 6px; fill: none; stroke: #444; stroke-width: 2; }
.scroll span { width: 15px; height: 72px; margin: 33px 0 auto; background: #cdcdcd; }
.fold { display: flex; align-items: center; gap: 3px; margin: 6px 0 7px 7px; }
.fold::before { content: ""; border: 4px solid transparent; border-top: 5px solid #000; border-bottom: 0; }
fieldset { display: flex; margin: 0 3px 9px 5px; padding: 0 0 1px; border: 0; border-bottom: 1px solid #a8a8a8; }
legend { padding: 0; height: 17px; }
label { display: flex; align-items: center; white-space: nowrap; }
fieldset label { margin-right: 11px; }
fieldset label:last-child { margin-right: 0; }
input { appearance: none; width: 13px; height: 13px; flex: none; margin: 0 3px 0 0; border: 1px solid #333; background: #fff; }
input[type=radio] { border-radius: 50%; }
input[type=radio]:checked { background: radial-gradient(#333 0 3px, #fff 4px); }
input[type=checkbox]:checked { background: #fff url("data:image/svg+xml,%3Csvg xmlns='http://www.w3.org/2000/svg' width='11' height='11'%3E%3Cpath d='M2 5l3 3 5-6' fill='none' stroke='%23333' stroke-width='1.300'/%3E%3C/svg%3E") center no-repeat; }
.flip { padding-left: 5px; }
.presets { display: flex; flex-direction: column; gap: 3px; padding: 12px 8px 8px 6px; }
.presets label { height: 15px; }
.filter { display: grid; grid-template-columns: 92px 1fr; padding: 6px 0 0 4px; }
.filter label { height: 15px; }

.info { display: flex; flex: none; height: 31px; margin: 0; padding: 0 11px; border-top: 1px solid #d5d5d5; gap: 30px; }
.info dd { margin: 0; }
.info div { white-space: nowrap; }
.status { display: grid; grid-template-columns: 295px 78px 160px 251px 184px 66px 173px 1fr; flex: none; height: 23px; border-top: 1px solid #d9d9d9; line-height: 23px; }
.status span { padding-left: 4px; border-left: 1px solid #d5d5d5; white-space: nowrap; overflow: hidden; }
.status span:first-child { padding-left: 2px; border: 0; }

.taskbar { display: flex; height: 40px; flex: none; background: #2f2c22; color: #fff; }
.taskbar > button { display: flex; align-items: center; justify-content: center; position: relative; width: 49px; }
.taskbar > button:not(.app) { width: 48px; }
.taskbar button svg { display: block; width: 24px; height: 24px; }
.app:nth-child(4) { margin-left: 3px; }
.run::after { content: ""; position: absolute; left: 4px; right: 5px; bottom: 0; height: 2px; background: #76b9ed; }
.taskbar .active { background: #56554d; }
.active.run::after { left: 0; right: 0; }
.ki { width: 24px; height: 24px; border-radius: 3px; background: #3247ca; font: 700 16px/24px "Open Sans", sans-serif; }
.badge { position: absolute; right: 1px; bottom: 4px; width: 20px; height: 17px; border: 1px solid #999; border-radius: 9px; background: #283a3d; font: 700 11px/15px "Open Sans", sans-serif; }
.tray { display: flex; align-items: center; gap: 8px; margin-left: auto; margin-right: 4px; padding-right: 19px; border-right: 1px solid #777; }
.tray svg { fill: none; stroke: #fff; stroke-width: 1.300; }
.taskbar .tray button svg { width: 16px; height: 16px; }
.lang { padding: 0 5px 0 3px; font-size: 12px; }
.clock { text-align: center; line-height: 18px; }
.tray .note { margin-left: 9px; }
.taskbar .tray .note svg { width: 18px; height: 18px; }
```
